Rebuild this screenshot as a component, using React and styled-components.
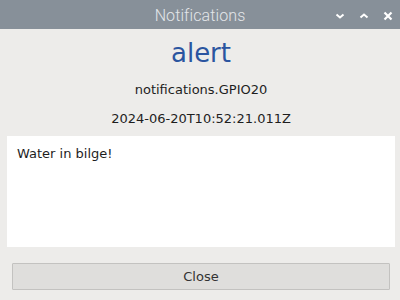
import React from 'react';
import styled, { createGlobalStyle } from 'styled-components';

const Global = createGlobalStyle`
  html, body {
    margin: 0;
    padding: 0;
    width: 400px;
    height: 300px;
    overflow: hidden;
    background: #edecea;
  }
`;

const Window = styled.div`
  width: 400px;
  height: 300px;
  display: flex;
  flex-direction: column;
  background: #edecea;
  font-family: "DejaVu Sans", sans-serif;
  color: #1e1e1e;
`;

const TitleBar = styled.div`
  height: 29px;
  flex: none;
  background: #879099;
  position: relative;
  display: flex;
  align-items: center;
  justify-content: center;
  padding-top: 2px;
  box-sizing: border-box;
`;

const Title = styled.div`
  font-family: Roboto, "Noto Sans", sans-serif;
  font-weight: 300;
  font-size: 16px;
  color: #e3e6e9;
  letter-spacing: 0.1px;
`;

const Controls = styled.div`
  position: absolute;
  right: 6px;
  top: 1px;
  height: 29px;
  display: flex;
  align-items: center;
  gap: 12px;
`;

const Ctrl = styled.svg`
  width: 12px;
  height: 12px;
  display: block;
`;

const Body = styled.div`
  flex: 1;
  display: flex;
  flex-direction: column;
  padding: 0 5px 0 7px;
`;

const Heading = styled.div`
  text-align: center;
  font-size: 26px;
  color: #2b55a0;
  margin-top: 8px;
  line-height: 32px;
`;

const Line = styled.div`
  text-align: center;
  font-size: 13px;
  line-height: 16px;
  margin-top: ${p => p.$top}px;
`;

const Message = styled.div`
  background: #ffffff;
  height: 111px;
  margin-top: 9px;
  padding: 10px 10px;
  box-sizing: border-box;
  font-size: 13px;
  line-height: 16px;
`;

const Button = styled.button`
  margin: 16px 5px 0 5px;
  height: 27px;
  background: #dfdedc;
  border: 1px solid #c3c2c0;
  border-radius: 1px;
  font-family: "DejaVu Sans", sans-serif;
  font-size: 13px;
  color: #333333;
  padding: 0;
`;

function Chevron({ up }) {
  return (
    <Ctrl viewBox="0 0 12 12">
      <path
        d={up ? 'M2.5 7.5 L6 4.5 L9.5 7.5' : 'M2.5 4.5 L6 7.5 L9.5 4.5'}
        fill="none"
        stroke="#ffffff"
        strokeWidth="2"
      />
    </Ctrl>
  );
}

function Cross() {
  return (
    <Ctrl viewBox="0 0 12 12">
      <path d="M2.5 2.5 L9.5 9.5 M9.5 2.5 L2.5 9.5" fill="none" stroke="#ffffff" strokeWidth="2.2" />
    </Ctrl>
  );
}

export default function App() {
  return (
    <>
      <Global />
      <Window>
        <TitleBar>
          <Title>Notifications</Title>
          <Controls>
            <Chevron />
            <Chevron up />
            <Cross />
          </Controls>
        </TitleBar>
        <Body>
          <Heading>alert</Heading>
          <Line $top={13}>notifications.GPIO20</Line>
          <Line $top={13}>2024-06-20T10:52:21.011Z</Line>
          <Message>Water in bilge!</Message>
          <Button>Close</Button>
        </Body>
      </Window>
    </>
  );
}
